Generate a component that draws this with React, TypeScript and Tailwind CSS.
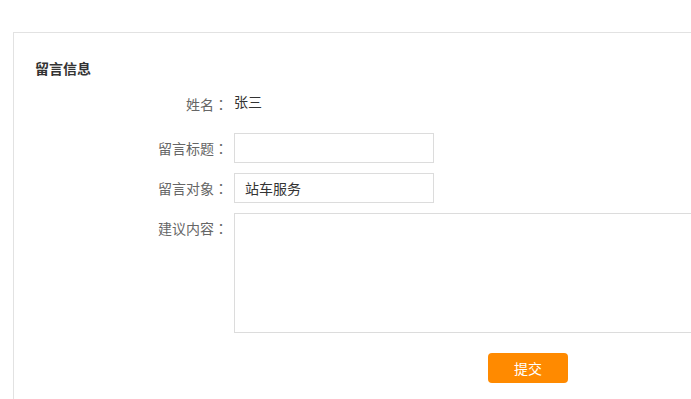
import React from "react";

const font = { fontFamily: '"Noto Sans CJK SC", "Liberation Sans", sans-serif' };

const Label: React.FC<{ text: string }> = ({ text }) => (
  <div className="w-[220px] shrink-0 pr-[6px] text-right text-[14px] leading-[30px] text-[#666]">
    {text}
    <span style={{ fontFamily: '"Noto Sans CJK JP", sans-serif' }}>：</span>
  </div>
);

export default function App() {
  return (
    <div className="h-screen w-screen overflow-hidden bg-white" style={font}>
      <div className="ml-[13px] mt-[32px] w-[900px] min-h-[500px] border-t border-l border-[#e2e2e2]">
        <h2 className="pl-[21px] pt-[25px] text-[14px] leading-[20px] font-bold text-[#333]">留言信息</h2>

        <div className="mt-[11px] flex items-start">
          <Label text="姓名" />
          <div className="text-[14px] leading-[24px] text-[#333]">张三</div>
        </div>

        <div className="mt-[14px] flex items-start">
          <Label text="留言标题" />
          <input className="h-[30px] w-[200px] border border-[#dcdcdc] px-[10px] text-[14px] text-[#333] outline-none" />
        </div>

        <div className="mt-[10px] flex items-start">
          <Label text="留言对象" />
          <input
            defaultValue="站车服务"
            className="h-[30px] w-[200px] border border-[#dcdcdc] px-[10px] text-[14px] text-[#333] outline-none"
          />
        </div>

        <div className="mt-[10px] flex items-start">
          <Label text="建议内容" />
          <div className="flex flex-col items-center">
            <textarea className="block h-[120px] w-[588px] resize-none border border-[#dcdcdc] p-[8px] text-[14px] text-[#333] outline-none" />
            <button className="mt-[20px] h-[30px] w-[80px] rounded-[4px] bg-[#ff8a00] text-[14px] text-white">提交</button>
          </div>
        </div>
      </div>
    </div>
  );
}
